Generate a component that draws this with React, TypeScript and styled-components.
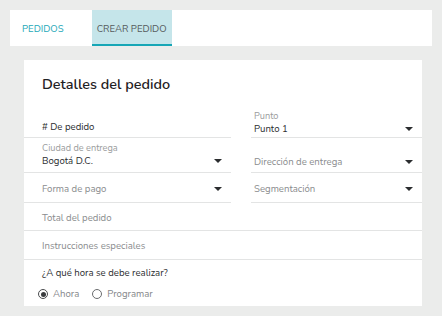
import React from "react";
import styled, { createGlobalStyle } from "styled-components";

const Global = createGlobalStyle`
  html, body { margin: 0; padding: 0; background: #ebeceb; }
  body { font-family: "Nunito", "Lato", "Open Sans", sans-serif; }
  * { box-sizing: border-box; }
`;

const Page = styled.div`
  width: 442px;
  height: 316px;
  padding: 10px 10px 0 10px;
  display: flex;
  flex-direction: column;
`;

const TabBar = styled.nav`
  height: 36px;
  background: #ffffff;
  display: flex;
  align-items: stretch;
  padding-left: 7px;
  gap: 23px;
`;

const Tab = styled.div<{ $active?: boolean }>`
  display: flex;
  align-items: center;
  padding: 2px 5px 0 5px;
  font-size: 9.6px;
  text-transform: uppercase;
  color: ${(p) => (p.$active ? "#555a5c" : "#1ea8b8")};
  background: ${(p) => (p.$active ? "#c5e5ea" : "transparent")};
  border-bottom: 2px solid ${(p) => (p.$active ? "#16a6b6" : "transparent")};
`;

const Card = styled.section`
  margin: 14px 10px 0 14px;
  background: #ffffff;
  height: 246px;
  display: flex;
  flex-direction: column;
`;

const Title = styled.h2`
  margin: 0;
  padding: 14px 0 0 18px;
  height: 44px;
  font-size: 14.4px;
  font-weight: 600;
  color: #1f2123;
`;

const Grid = styled.div`
  display: grid;
  grid-template-columns: 207px 171px;
  column-gap: 20px;
`;

const Field = styled.div<{ $h: number; $side?: "left" | "right"; $wide?: boolean; $pb?: number }>`
  grid-column: ${(p) => (p.$wide ? "1 / span 2" : "auto")};
  height: ${(p) => p.$h}px;
  border-bottom: 1px solid #e3e4e4;
  display: flex;
  align-items: flex-end;
  padding: 0 9px ${(p) => p.$pb ?? 6}px ${(p) => (p.$side === "right" ? 3 : 18)}px;
`;

const FieldBody = styled.div`
  flex: 1;
  display: flex;
  flex-direction: column;
`;

const Label = styled.span`
  font-size: 9.2px;
  line-height: 12px;
  color: #9a9c9d;
`;

const Value = styled.span<{ $muted?: boolean }>`
  font-size: 9.6px;
  line-height: 14px;
  color: ${(p) => (p.$muted ? "#8a8c8e" : "#2b2d2f")};
`;

const Caret = styled.span`
  width: 0;
  height: 0;
  border-left: 4.5px solid transparent;
  border-right: 4.5px solid transparent;
  border-top: 4.5px solid #2b2d2f;
  margin-bottom: 5px;
`;

const Question = styled.div`
  padding: 6px 0 0 18px;
  font-size: 9.6px;
  line-height: 14px;
  color: #2b2d2f;
`;

const RadioRow = styled.div`
  display: flex;
  align-items: center;
  gap: 13px;
  padding: 7px 0 0 14px;
`;

const RadioOption = styled.label`
  display: flex;
  align-items: center;
  gap: 5px;
  font-size: 9.6px;
  line-height: 14px;
  color: #85878a;
`;

const RadioDot = styled.span<{ $checked?: boolean }>`
  width: 10px;
  height: 10px;
  border-radius: 50%;
  border: 1.2px solid ${(p) => (p.$checked ? "#4a4c4e" : "#6a6c6e")};
  display: flex;
  align-items: center;
  justify-content: center;
  &::after {
    content: "";
    width: 5px;
    height: 5px;
    border-radius: 50%;
    background: ${(p) => (p.$checked ? "#3a3c3e" : "transparent")};
  }
`;

export default function App() {
  return (
    <>
      <Global />
      <Page>
        <TabBar>
          <Tab>Pedidos</Tab>
          <Tab $active>Crear pedido</Tab>
        </TabBar>
        <Card>
          <Title>Detalles del pedido</Title>
          <Grid>
            <Field $h={34} $pb={3}>
              <FieldBody>
                <Value>#&nbsp;De pedido</Value>
              </FieldBody>
            </Field>
            <Field $h={34} $side="right" $pb={1}>
              <FieldBody>
                <Label>Punto</Label>
                <Value>Punto 1</Value>
              </FieldBody>
              <Caret />
            </Field>
            <Field $h={35} $pb={4}>
              <FieldBody>
                <Label>Ciudad de entrega</Label>
                <Value>Bogotá D.C.</Value>
              </FieldBody>
              <Caret />
            </Field>
            <Field $h={35} $side="right" $pb={3}>
              <FieldBody>
                <Value $muted>Dirección de entrega</Value>
              </FieldBody>
              <Caret />
            </Field>
            <Field $h={30} $pb={6}>
              <FieldBody>
                <Value $muted>Forma de pago</Value>
              </FieldBody>
              <Caret />
            </Field>
            <Field $h={30} $side="right" $pb={6}>
              <FieldBody>
                <Value $muted>Segmentación</Value>
              </FieldBody>
              <Caret />
            </Field>
            <Field $h={28} $wide $pb={5}>
              <FieldBody>
                <Value $muted>Total del pedido</Value>
              </FieldBody>
            </Field>
            <Field $h={29} $wide $pb={6}>
              <FieldBody>
                <Value $muted>Instrucciones especiales</Value>
              </FieldBody>
            </Field>
          </Grid>
          <Question>¿A qué hora se debe realizar?</Question>
          <RadioRow>
            <RadioOption>
              <RadioDot $checked />
              Ahora
            </RadioOption>
            <RadioOption>
              <RadioDot />
              Programar
            </RadioOption>
          </RadioRow>
        </Card>
      </Page>
    </>
  );
}
